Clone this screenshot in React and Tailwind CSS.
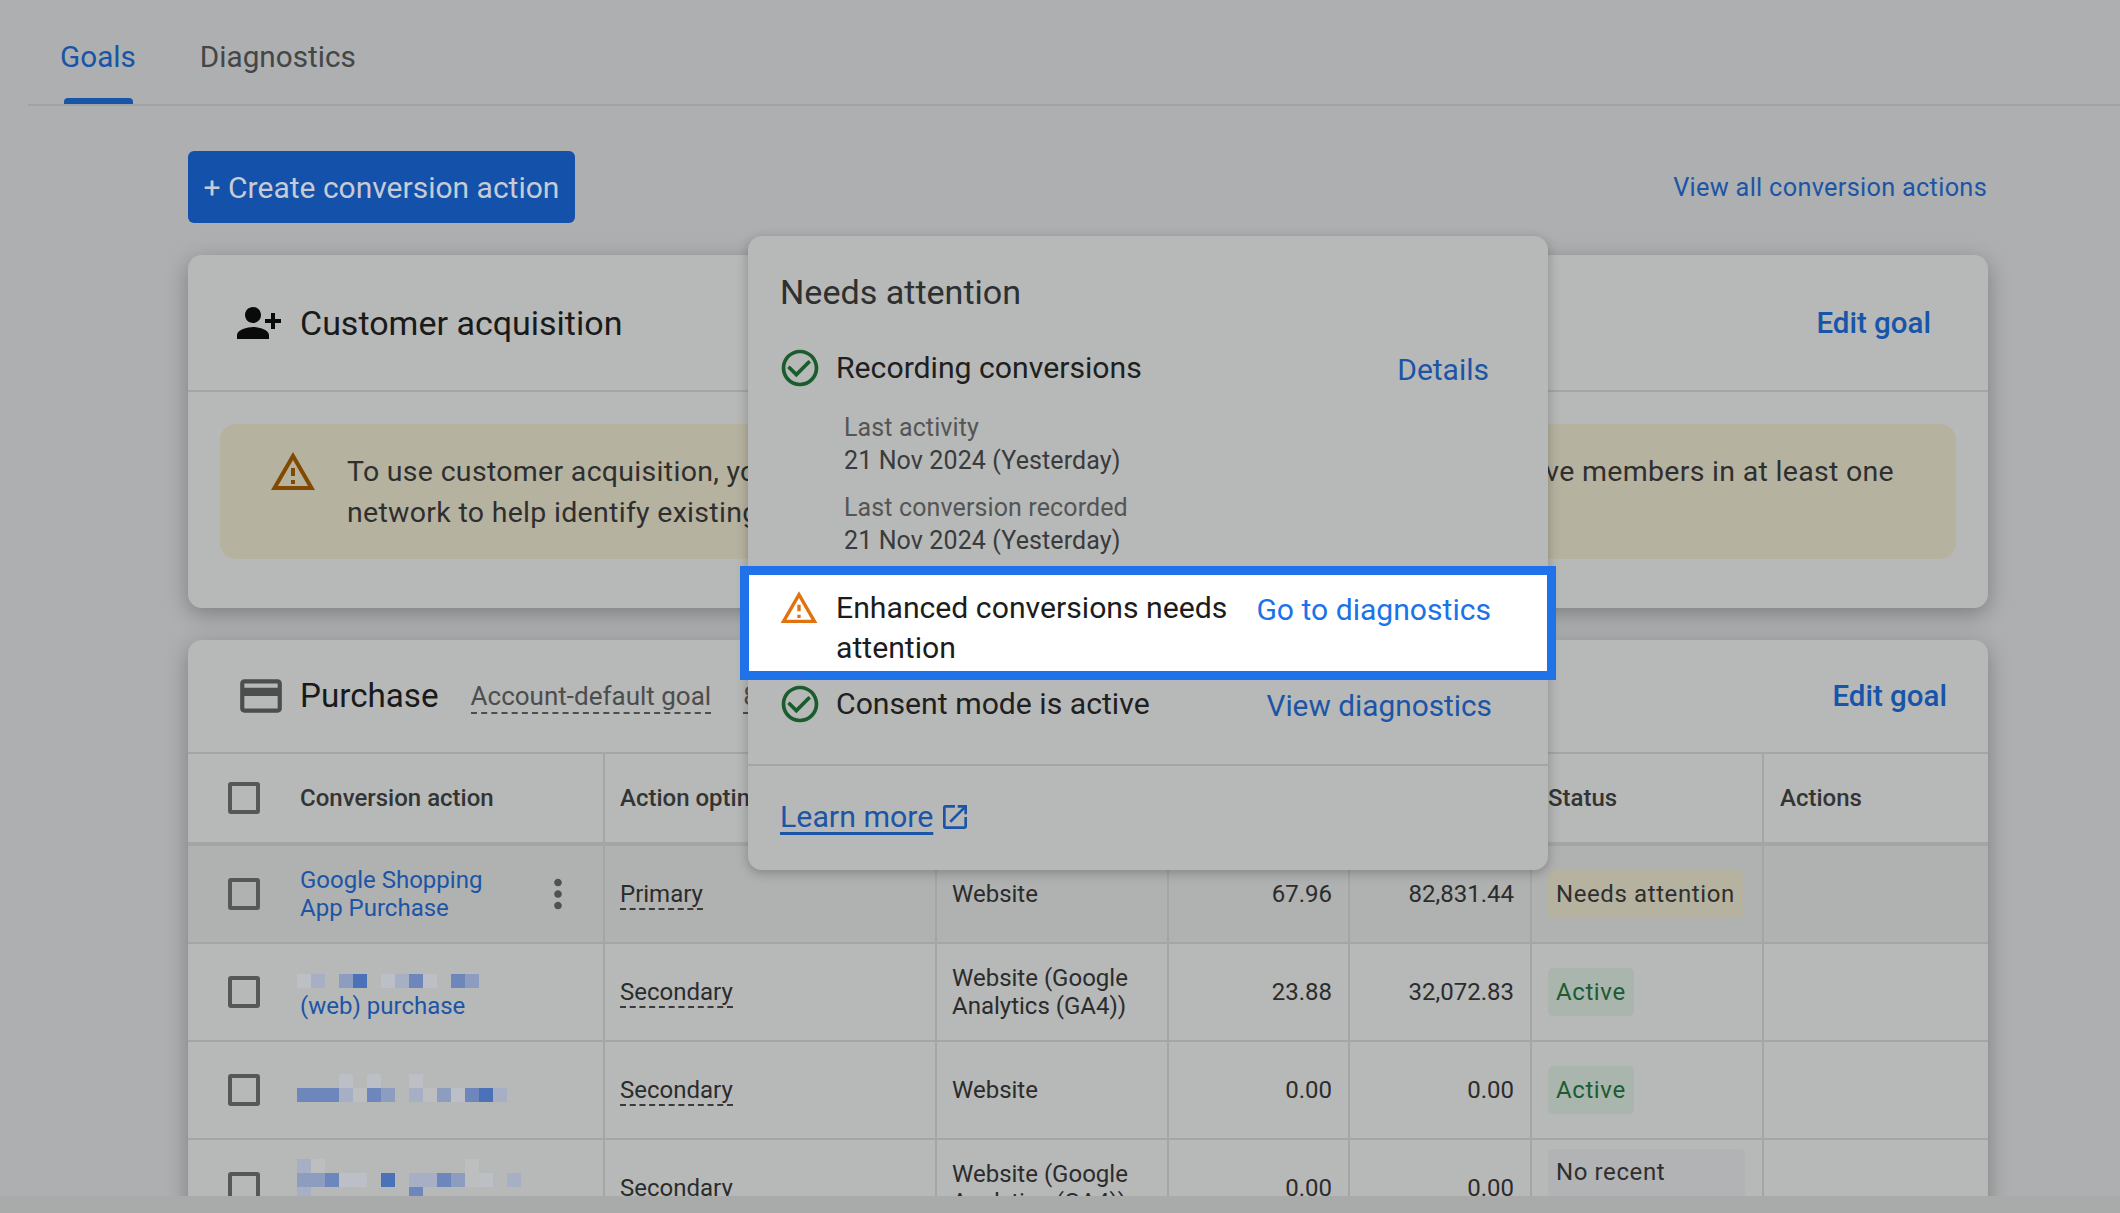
import { MdCheckCircleOutline, MdOutlineCreditCard, MdMoreVert, MdOpenInNew, MdOutlineWarningAmber } from 'react-icons/md';

const personAdd = 'M15 12c2.21 0 4-1.79 4-4s-1.79-4-4-4-4 1.79-4 4 1.79 4 4 4zm-9-2V7H4v3H1v2h3v3h2v-3h3v-2H6zm9 4c-2.67 0-8 1.34-8 4v2h16v-2c0-2.66-5.33-4-8-4z';

const shades = { a: '#4b71b8', b: '#6d87bd', c: '#8d9dc0', d: '#a6afc3', e: '#bcbfc6', f: '#bdbec0' };

// cells of the blurred names: row, shades by column
const blur3 = [
  [0, '...e.e..e'],
  [1, 'bbbdfbc.dfcebad'],
];
const blur4 = [
  [0, 'df..........f'],
  [1, 'ccbee.a.ddbcfe.d'],
  [2, 'd.......b'],
];

const Mosaic = ({ rows }) => (
  <svg width="240" height={rows.length * 14} className="block -ml-[3px]">
    {rows.map(([r, cells]) =>
      cells.split('').map((c, i) =>
        shades[c] ? <rect key={`${r}-${i}`} x={i * 14} y={r * 14} width="14" height="14" fill={shades[c]} /> : null
      )
    )}
  </svg>
);

const Checkbox = () => <div className="w-8 h-8 shrink-0 rounded-[3px] border-[4px] border-[#565757]" />;

const Underlined = ({ children }) => (
  <span className="mt-[2px] border-b-2 border-dashed border-[#3a3a3a] leading-[27px] inline-block">{children}</span>
);

const Cell = ({ children, className = '' }) => (
  <div className={`border-l-2 border-[#a4a5a6] flex items-center pl-[15px] pr-[16px] ${className}`}>{children}</div>
);

const Chip = ({ children, className = '' }) => (
  <div className={`ml-px h-[48px] px-[8px] rounded-[5px] flex items-center whitespace-nowrap tracking-[0.6px] ${className}`}>{children}</div>
);

const rowGrid = 'grid grid-cols-[415px_332px_232px_181px_182px_232px_226px] h-[98px] border-b-2 border-[#a4a5a6] text-[24px] text-[#2b2c2c]';

const rows = [
  {
    name: (
      <div className="text-[#1c55a6] leading-[28px]">
        Google Shopping
        <br />
        App Purchase
      </div>
    ),
    goal: 'Primary',
    source: 'Website',
    conv: '67.96',
    value: '82,831.44',
    status: <Chip className="bg-[#b6b2a0] text-[#2f2f2f]">Needs attention</Chip>,
    menu: true,
    hover: true,
  },
  {
    name: (
      <div className="text-[#1c55a6] mt-[10px]">
        <Mosaic rows={[[0, 'ed.ca.edbe.bc']]} />
        <div className="leading-[28px] mt-[4px]">(web) purchase</div>
      </div>
    ),
    goal: 'Secondary',
    source: (
      <div className="leading-[28px]">
        Website (Google
        <br />
        Analytics (GA4))
      </div>
    ),
    conv: '23.88',
    value: '32,072.83',
    status: <Chip className="bg-[#a9b5ad] text-[#1c5c30]">Active</Chip>,
  },
  {
    name: <div className="-mt-[4px]"><Mosaic rows={blur3} /></div>,
    goal: 'Secondary',
    source: 'Website',
    conv: '0.00',
    value: '0.00',
    status: <Chip className="bg-[#a9b5ad] text-[#1c5c30]">Active</Chip>,
  },
  {
    name: <div className="-mt-[16px]"><Mosaic rows={blur4} /></div>,
    goal: 'Secondary',
    source: (
      <div className="leading-[28px]">
        Website (Google
        <br />
        Analytics (GA4))
      </div>
    ),
    conv: '0.00',
    value: '0.00',
    status: <div className="ml-px self-start mt-[9px] w-[197px] px-[8px] pt-[4px] rounded-[5px] bg-[#b2b3b5] text-[#2f2f2f] tracking-[0.6px] leading-[38px]">No recent conversions</div>,
  },
];

const App = () => {
  return (
    <div className="w-[2120px] h-[1213px] flex flex-col overflow-hidden bg-[#adafb0] [font-family:Roboto,sans-serif]">
      <main className="relative flex-1 min-h-0 overflow-hidden">
        {/* tabs */}
        <div className="ml-[28px] h-[106px] border-b-2 border-[#a2a3a4] flex items-start text-[29.7px] leading-[38px]">
          <div className="relative ml-[32px] h-full pt-[38px] text-[#1755a8]">
            Goals
            <div className="absolute left-[4px] right-[3px] bottom-0 h-[6px] rounded-t-[4px] bg-[#1755a8]" />
          </div>
          <div className="ml-[64px] pt-[38px] text-[#444647]">Diagnostics</div>
        </div>

        <div className="ml-[188px] w-[1800px]">
          <div className="mt-[45px] flex items-center justify-between h-[72px]">
            <button className="h-[72px] w-[387px] pt-px rounded-[6px] bg-[#1351aa] text-[#c6cbd6] text-[30px] text-center">
              + Create conversion action
            </button>
            <a className="mt-[2px] text-[#1c55a6] text-[25.3px] tracking-[0.3px] mr-px">View all conversion actions</a>
          </div>

          {/* customer acquisition card */}
          <section className="mt-[32px] h-[353px] rounded-[14px] bg-[#b7b8b8] shadow-[0_6px_22px_rgba(0,0,0,0.28)]">
            <div className="h-[137px] border-b-2 border-[#a4a5a6] flex items-center pl-[47px] pr-[57px]">
              <svg viewBox="0 0 24 24" className="w-[48px] h-[48px] -scale-x-100 text-[#0a0a0a]" fill="currentColor">
                <path d={personAdd} />
              </svg>
              <h2 className="ml-[17px] mt-[2px] text-[34px] text-[#1a1a1a]">Customer acquisition</h2>
              <a className="ml-auto mt-px text-[29.5px] font-medium text-[#1755a8]">Edit goal</a>
            </div>
            <div className="mx-[32px] mt-[32px] h-[135px] rounded-[16px] bg-[#b6b2a0] flex items-start pl-[49px] pr-[62px]">
              <MdOutlineWarningAmber className="w-[48px] h-[48px] mt-[24px] shrink-0 text-[#824a00]" />
              <div className="ml-[30px] mt-[27px] flex-1 text-[28.5px] leading-[41px] tracking-[0.3px] text-[#2f2f2f]">
                <div className="flex justify-between">
                  <span>To use customer acquisition, you need to</span>
                  <span>have members in at least one</span>
                </div>
                <div>network to help identify existing customers</div>
              </div>
            </div>
          </section>

          {/* purchase card */}
          <section className="mt-[32px] rounded-t-[14px] bg-[#b7b8b8] shadow-[0_6px_22px_rgba(0,0,0,0.28)]">
            <div className="h-[114px] border-b-2 border-[#a4a5a6] flex items-center pl-[48px] pr-[41px]">
              <MdOutlineCreditCard className="w-[50px] h-[50px] text-[#4c4d4d]" />
              <h2 className="ml-[14px] text-[33.2px] text-[#1a1a1a]">Purchase</h2>
              <span className="ml-[32px] text-[26px] text-[#4c4d4d]">
                <span className="border-b-2 border-dashed border-[#4c4d4d] leading-[31px] inline-block">Account-default goal</span>
              </span>
              <span className="ml-[32px] text-[26px] text-[#4c4d4d]">
                <span className="border-b-2 border-dashed border-[#4c4d4d] leading-[31px] inline-block">8 actions</span>
              </span>
              <a className="ml-auto text-[29.5px] font-medium text-[#1755a8]">Edit goal</a>
            </div>

            <div className="grid grid-cols-[415px_332px_232px_181px_182px_232px_226px] h-[92px] text-[24px] font-medium text-[#333434] border-b-4 border-[#a4a5a6]">
              <div className="flex items-center pl-[40px]">
                <Checkbox />
                <span className="ml-[40px]">Conversion action</span>
              </div>
              <Cell className="whitespace-nowrap">Action optimization</Cell>
              <Cell>Conversion source</Cell>
              <Cell className="justify-end">All conv.</Cell>
              <Cell className="justify-end">All conv. value</Cell>
              <Cell><span className="ml-px">Status</span></Cell>
              <Cell><span className="ml-px">Actions</span></Cell>
            </div>

            {rows.map((row, i) => (
              <div key={i} className={`${rowGrid} ${row.hover ? 'bg-[#b0b1b1]' : ''}`}>
                <div className="flex items-center pl-[40px]">
                  <Checkbox />
                  <div className="ml-[40px] flex-1 min-w-0">{row.name}</div>
                  {row.menu && <MdMoreVert className="w-[46px] h-[46px] mr-[22px] text-[#505151]" />}
                </div>
                <Cell>
                  <Underlined>{row.goal}</Underlined>
                </Cell>
                <Cell>{row.source}</Cell>
                <Cell className="justify-end">{row.conv}</Cell>
                <Cell className="justify-end">{row.value}</Cell>
                <Cell>{row.status}</Cell>
                <Cell />
              </div>
            ))}
          </section>
        </div>

        {/* popover */}
        <div className="absolute left-[748px] top-[236px] w-[800px] h-[634px] rounded-[14px] bg-[#b7b8b8] shadow-[0_3px_12px_rgba(0,0,0,0.25)]">
          <h3 className="pl-[32px] pt-[36px] text-[34.1px] leading-[40px] text-[#2e2f2f]">Needs attention</h3>

          <div className="mt-[36px] flex items-center h-[40px] pl-[30px] pr-[59px]">
            <MdCheckCircleOutline className="w-[44px] h-[44px] text-[#1a5c2e] shrink-0" />
            <span className="ml-[14px] text-[30.2px] text-[#202020]">Recording conversions</span>
            <a className="ml-auto mt-[2px] text-[30px] text-[#1c55a6]">Details</a>
          </div>

          <div className="pl-[96px] text-[25px] leading-[33px] tracking-[0.12px]">
            <div className="mt-[23px]">
              <div className="text-[#545555]">Last activity</div>
              <div className="text-[#3a3b3b]">21 Nov 2024 (Yesterday)</div>
            </div>
            <div className="mt-[14px]">
              <div className="text-[#545555]">Last conversion recorded</div>
              <div className="text-[#3a3b3b]">21 Nov 2024 (Yesterday)</div>
            </div>
          </div>

          <div className="mt-[9px] -mx-[8px] h-[114px] border-[9px] border-[#1f72e8] bg-white flex items-start pl-[30px] pr-[56px] pt-[13px]">
            <MdOutlineWarningAmber className="w-[40px] h-[40px] shrink-0 text-[#e0720f]" />
            <div className="ml-[17px] w-[400px] text-[30.2px] leading-[40px] text-[#1c1c1c]">Enhanced conversions needs attention</div>
            <a className="ml-auto mt-px text-[30.1px] leading-[41px] text-[#1a73e8]">Go to diagnostics</a>
          </div>

          <div className="mt-[4px] flex items-center h-[40px] pl-[30px] pr-[56px]">
            <MdCheckCircleOutline className="w-[44px] h-[44px] text-[#1a5c2e] shrink-0" />
            <span className="ml-[14px] text-[30.2px] text-[#202020]">Consent mode is active</span>
            <a className="ml-auto mt-[5px] text-[29.8px] text-[#1c55a6]">View diagnostics</a>
          </div>

          <div className="mt-[40px] border-t-2 border-[#a4a5a6] pl-[32px] pt-[32px] flex items-center h-[72px]">
            <a className="text-[30.3px] leading-[40px] text-[#1c55a6] underline underline-offset-[5px]">Learn more</a>
            <MdOpenInNew className="ml-[6px] w-[32px] h-[32px] text-[#1c55a6]" />
          </div>
        </div>
      </main>
      <div className="h-[17px] shrink-0 bg-[#a9aaaa]" />
    </div>
  );
};

export default App;
